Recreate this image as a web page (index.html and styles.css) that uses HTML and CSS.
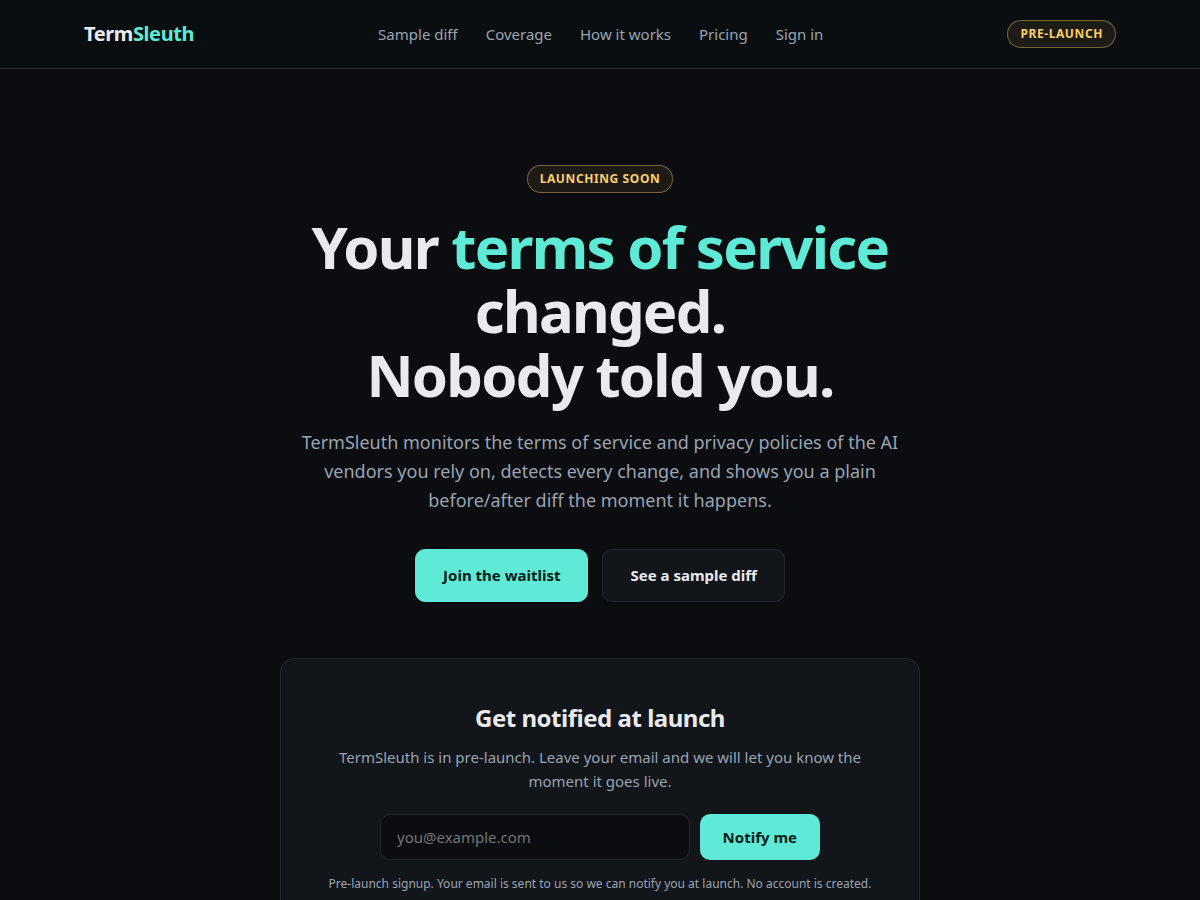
FILE: index.html
```html
<!doctype html>
<html lang="en">
<head>
    <meta charset="utf-8">
    <meta name="viewport" content="width=device-width, initial-scale=1">
    <title>TermSleuth</title>
    <link rel="stylesheet" href="styles.css">
</head>
<body>
    <header class="site-header">
        <div class="wrap nav">
            <a class="logo" href="#">Term<span class="accent">Sleuth</span></a>
            <nav class="nav-links">
                <a href="#sample">Sample diff</a>
                <a href="#coverage">Coverage</a>
                <a href="#how">How it works</a>
                <a href="#pricing">Pricing</a>
                <a href="#signin">Sign in</a>
            </nav>
            <span class="badge">Pre-launch</span>
        </div>
    </header>

    <main>
        <section class="hero wrap">
            <span class="badge">Launching soon</span>
            <h1>Your <span class="accent">terms of service</span> changed.<br>Nobody told you.</h1>
            <p class="lead">TermSleuth monitors the terms of service and privacy policies of the AI vendors you rely on, detects every change, and shows you a plain before/after diff the moment it happens.</p>
            <div class="cta">
                <a class="btn btn-primary" href="#waitlist">Join the waitlist</a>
                <a class="btn btn-ghost" href="#sample">See a sample diff</a>
            </div>

            <div class="signup" id="waitlist">
                <h2>Get notified at launch</h2>
                <p class="signup-text">TermSleuth is in pre-launch. Leave your email and we will let you know the moment it goes live.</p>
                <form class="signup-form">
                    <input type="email" placeholder="you@example.com" aria-label="Email address">
                    <button type="submit">Notify me</button>
                </form>
                <p class="note">Pre-launch signup. Your email is sent to us so we can notify you at launch. No account is created.</p>
            </div>
        </section>
    </main>
</body>
</html>
```
FILE: styles.css
```css
:root {
    --bg: #0b0d10;
    --panel: #12151a;
    --line: #232830;
    --text: #e8eaed;
    --muted: #9aa4b2;
    --accent: #5eead4;
    --amber: #fbcf6b;
}

* { box-sizing: border-box; margin: 0; padding: 0; }

body {
    background: var(--bg);
    color: var(--text);
    font-family: "Noto Sans", sans-serif;
    font-size: 16px;
    line-height: 26px;
}

a { color: inherit; text-decoration: none; }

.wrap {
    max-width: 1080px;
    margin: 0 auto;
    padding: 0 24px;
}

.accent { color: var(--accent); }

/* header */
.site-header {
    background: #0a0e11;
    border-bottom: 1px solid var(--line);
}
.nav {
    display: flex;
    align-items: center;
    justify-content: space-between;
    height: 68px;
}
.logo {
    font-size: 20px;
    font-weight: 700;
    letter-spacing: -0.02em;
}
.nav-links {
    display: flex;
    gap: 28px;
    font-size: 15px;
    line-height: 24px;
    color: var(--muted);
}

.badge {
    display: inline-block;
    padding: 4px 12px;
    border: 1px solid rgba(251, 207, 107, 0.4);
    border-radius: 99px;
    background: rgba(251, 207, 107, 0.08);
    color: var(--amber);
    font-size: 12px;
    line-height: 18px;
    font-weight: 700;
    letter-spacing: 0.05em;
    text-transform: uppercase;
}

/* hero */
.hero {
    padding-top: 96px;
    padding-bottom: 96px;
    text-align: center;
}
.hero .badge { vertical-align: top; }
.hero h1 {
    max-width: 760px;
    margin: 22px auto 21px;
    font-size: 58px;
    line-height: 64px;
    font-weight: 700;
    letter-spacing: -0.03em;
}
.lead {
    max-width: 620px;
    margin: 0 auto;
    color: var(--muted);
    font-size: 18px;
    line-height: 29px;
}
.cta {
    display: flex;
    justify-content: center;
    gap: 14px;
    margin: 34px 0 56px;
}
.btn {
    padding: 13px 27px;
    border: 1px solid var(--accent);
    border-radius: 10px;
    font-size: 15px;
    line-height: 25px;
    font-weight: 700;
}
.btn-primary {
    background: var(--accent);
    color: #06201c;
}
.btn-ghost {
    background: var(--panel);
    border-color: var(--line);
}

/* signup */
.signup {
    max-width: 640px;
    margin: 0 auto;
    padding: 40px 36px;
    border: 1px solid var(--line);
    border-radius: 14px;
    background: var(--panel);
}
.signup h2 {
    margin-bottom: 8px;
    font-size: 24px;
    line-height: 38px;
    font-weight: 700;
    letter-spacing: -0.02em;
}
.signup-text {
    color: var(--muted);
    font-size: 15px;
    line-height: 24px;
}
.signup-form {
    display: flex;
    gap: 10px;
    max-width: 440px;
    margin: 21px auto 13px;
}
.signup-form input {
    flex: 1;
    min-width: 0;
    padding: 12px 16px;
    border: 1px solid var(--line);
    border-radius: 10px;
    background: var(--bg);
    color: var(--text);
    font: inherit;
    font-size: 15px;
    line-height: 20px;
}
.signup-form button {
    padding: 12px 23px;
    border: 0;
    border-radius: 10px;
    background: var(--accent);
    color: #06201c;
    font: inherit;
    font-size: 15px;
    line-height: 22px;
    font-weight: 700;
    cursor: pointer;
}
.note {
    color: var(--muted);
    font-size: 12px;
    line-height: 22px;
}
```
